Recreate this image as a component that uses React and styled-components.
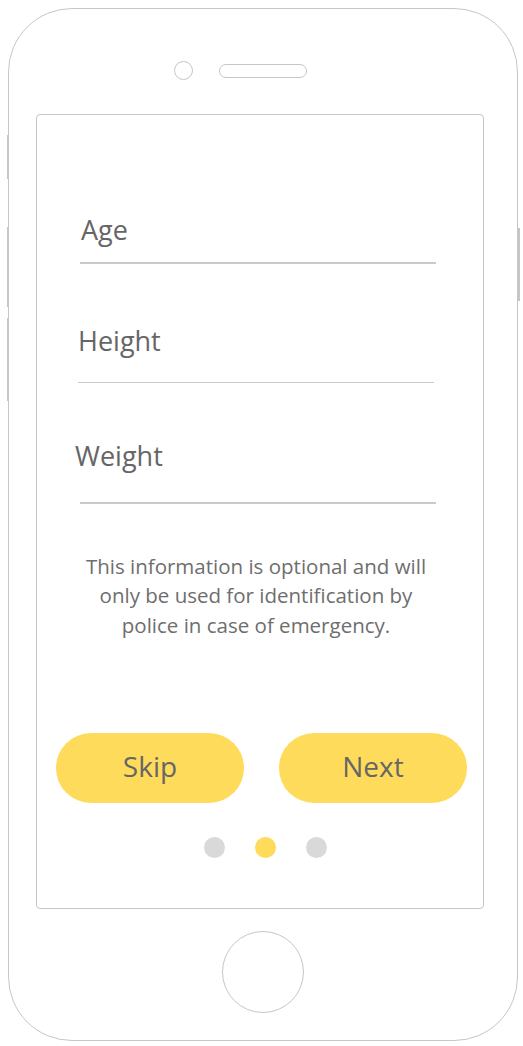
import React from "react";
import styled, { createGlobalStyle } from "styled-components";

const GlobalStyle = createGlobalStyle`
  html, body {
    margin: 0;
    padding: 0;
    background: #fff;
  }
  body {
    font-family: "Open Sans", Lato, sans-serif;
    color: #666;
  }
`;

const Page = styled.div`
  width: 523px;
  height: 1046px;
  padding: 8px 0 0 8px;
  box-sizing: border-box;
`;

const Phone = styled.div`
  position: relative;
  width: 510px;
  height: 1033px;
  box-sizing: border-box;
  border: 1.5px solid #c6c6c6;
  border-radius: 64px;
  display: flex;
  flex-direction: column;
  align-items: flex-start;
`;

const SideKey = styled.span`
  position: absolute;
  width: 2px;
  background: #c6c6c6;
  left: ${(p) => (p.$right ? "auto" : "-2px")};
  right: ${(p) => (p.$right ? "-3px" : "auto")};
  top: ${(p) => p.$top}px;
  height: ${(p) => p.$h}px;
`;

const Earpiece = styled.div`
  display: flex;
  align-items: center;
  gap: 26px;
  align-self: center;
  margin: 52px 45px 0 0;
`;

const Camera = styled.div`
  width: 19px;
  height: 19px;
  box-sizing: border-box;
  border: 1.5px solid #c6c6c6;
  border-radius: 50%;
`;

const Speaker = styled.div`
  width: 88px;
  height: 14px;
  box-sizing: border-box;
  border: 1.5px solid #c6c6c6;
  border-radius: 7px;
`;

const Screen = styled.div`
  margin: 34px 0 0 27px;
  width: 448px;
  height: 795px;
  box-sizing: border-box;
  border: 1.5px solid #c6c6c6;
  border-radius: 4px;
  display: flex;
  flex-direction: column;
  padding-top: 100px;
`;

const Field = styled.div`
  margin-top: ${(p) => p.$top}px;
  margin-left: ${(p) => p.$x}px;
  width: 356px;
`;

const Label = styled.div`
  font-size: 27px;
  line-height: 30px;
  color: #666;
  margin-left: ${(p) => p.$indent || 0}px;
  margin-bottom: ${(p) => p.$gap}px;
`;

const Rule = styled.div`
  height: 1.5px;
  background: #cacaca;
`;

const Note = styled.p`
  margin: 48px 0 0;
  padding-right: 8px;
  font-size: 20.5px;
  line-height: 29.5px;
  text-align: center;
  color: #6e6e6e;
`;

const Actions = styled.div`
  display: flex;
  gap: 35px;
  margin: 93px 0 0 19px;
`;

const Pill = styled.button`
  width: 188px;
  height: 70px;
  border: none;
  border-radius: 35px;
  background: #fedb5b;
  font-family: inherit;
  font-size: 28px;
  color: #666;
  padding: 0 0 5px;
  cursor: pointer;
`;

const Dots = styled.div`
  display: flex;
  justify-content: center;
  gap: 30px;
  margin-top: 34px;
  padding-left: 11px;
`;

const Dot = styled.span`
  width: 21px;
  height: 21px;
  border-radius: 50%;
  background: ${(p) => (p.$active ? "#fedb5b" : "#d9d9d9")};
`;

const HomeButton = styled.div`
  align-self: flex-start;
  margin: 22px 0 0 213px;
  width: 82px;
  height: 82px;
  box-sizing: border-box;
  border: 1.5px solid #c6c6c6;
  border-radius: 50%;
`;

const fields = [
  { label: "Age", top: 0, x: 43, indent: 1, gap: 17 },
  { label: "Height", top: 62, x: 41, indent: 0, gap: 26 },
  { label: "Weight", top: 58, x: 43, indent: -5, gap: 31 },
];

export default function App() {
  return (
    <Page>
      <GlobalStyle />
      <Phone>
        <SideKey $top={126} $h={44} />
        <SideKey $top={218} $h={80} />
        <SideKey $top={309} $h={83} />
        <SideKey $right $top={219} $h={73} />
        <Earpiece>
          <Camera />
          <Speaker />
        </Earpiece>
        <Screen>
          {fields.map((f) => (
            <Field key={f.label} $top={f.top} $x={f.x}>
              <Label $indent={f.indent} $gap={f.gap}>
                {f.label}
              </Label>
              <Rule />
            </Field>
          ))}
          <Note>
            This information is optional and will
            <br />
            only be used for identification by
            <br />
            police in case of emergency.
          </Note>
          <Actions>
            <Pill>Skip</Pill>
            <Pill>Next</Pill>
          </Actions>
          <Dots>
            <Dot />
            <Dot $active />
            <Dot />
          </Dots>
        </Screen>
        <HomeButton />
      </Phone>
    </Page>
  );
}
